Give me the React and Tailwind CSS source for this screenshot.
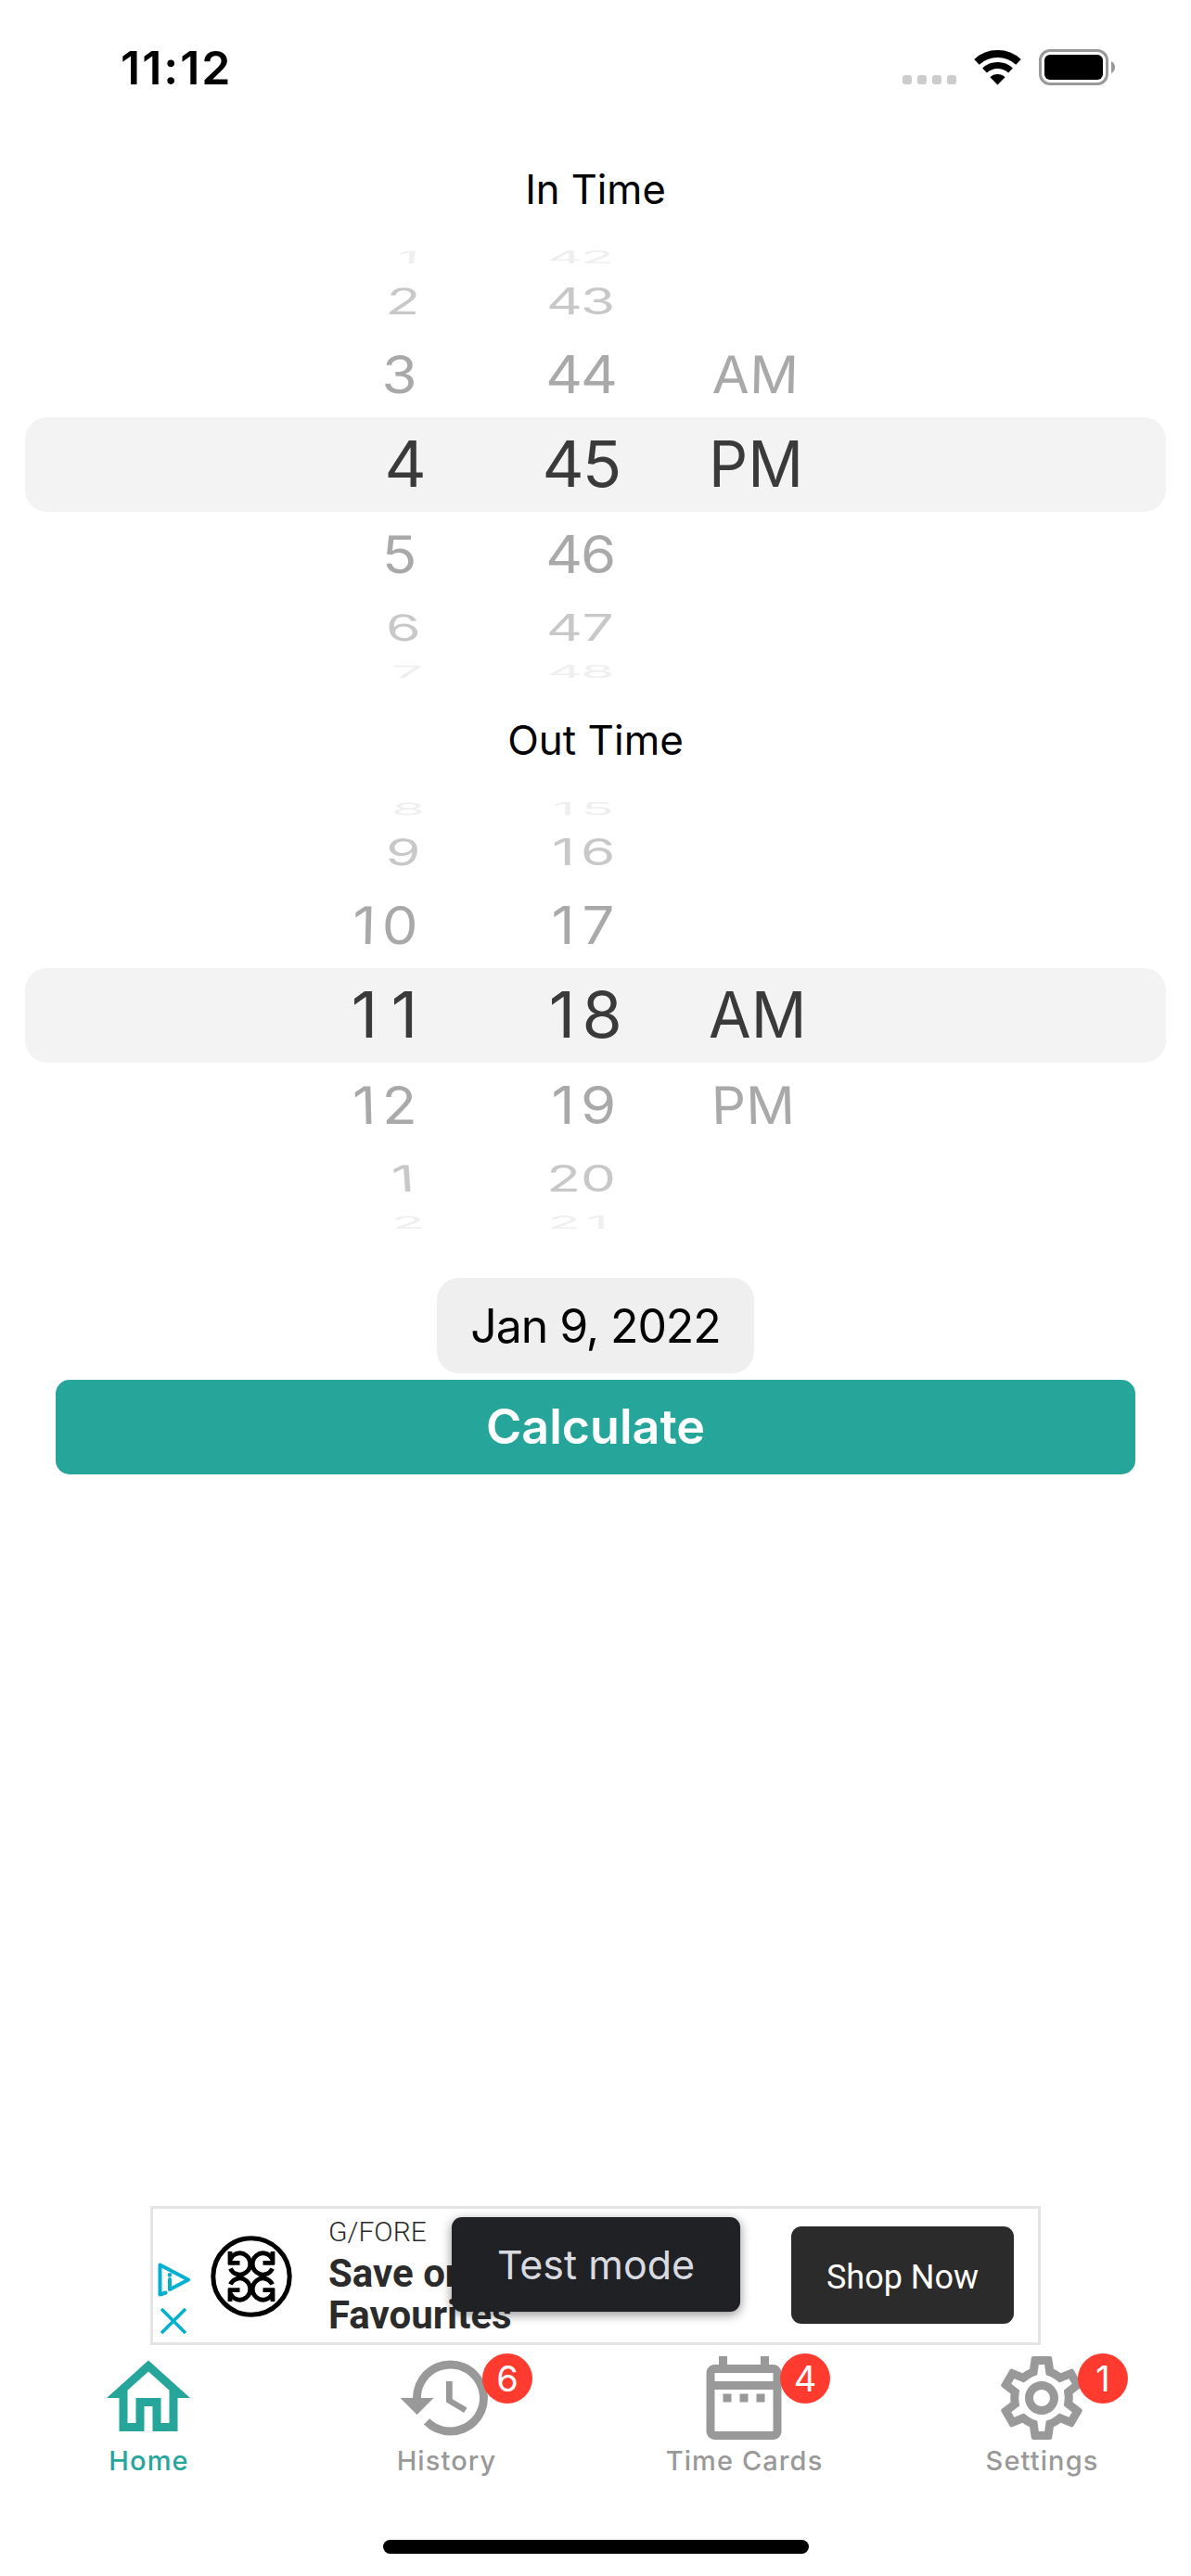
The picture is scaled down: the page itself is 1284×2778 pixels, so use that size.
import React from "react";
import { MdOutlineHome, MdHistory, MdOutlineDateRange, MdOutlineSettings } from "react-icons/md";

// Perspective of the wheel: each row's height, squash, tilt and fade.
const ROWS = [
  { h: "h-[20px]", sx: 0.84, sy: 0.26, color: "text-[#efefef]", skew: -8, hx: 0, mx: -2, px: 0 },
  { h: "h-[74px]", sx: 0.86, sy: 0.56, color: "text-[#c8c8c8]", skew: -4, hx: -5, mx: -2, px: 0 },
  { h: "h-[84px]", sx: 0.88, sy: 0.795, color: "text-[#a9a9a9]", skew: -1.5, hx: -8.5, mx: -2, px: 4 },
  { h: "h-[110px]", sx: 1, sy: 0.975, color: "text-[#3a3a3a]", skew: 0, hx: -0.5, mx: 0, px: 0 },
  { h: "h-[84px]", sx: 0.88, sy: 0.795, color: "text-[#a9a9a9]", skew: 1.5, hx: -8.5, mx: -2, px: 3 },
  { h: "h-[74px]", sx: 0.86, sy: 0.56, color: "text-[#c8c8c8]", skew: 4, hx: -5, mx: -2, px: 0 },
  { h: "h-[20px]", sx: 0.84, sy: 0.26, color: "text-[#efefef]", skew: 8, hx: 0, mx: -2, px: 0 },
];

function Digits({ value }) {
  return [...value].map((d, i) => <span key={i} className="inline-block w-[43px] text-center">{d}</span>);
}

function Picker({ hours, minutes, periods }) {
  return (
    <div className="relative h-[466px] px-[27px] flex flex-col justify-center">
      <div className="h-[102px] rounded-[24px] bg-[#f3f3f4]" />
      <div className="absolute inset-0 flex flex-col">
        {ROWS.map((r, i) => (
          <div key={i} className={"flex items-center text-[70px] leading-none " + r.h + " " + r.color}>
            <span className="w-[458px] flex justify-end">
              <span className="origin-right whitespace-nowrap" style={{ transform: `translateX(${r.hx}px) skewX(${r.skew}deg) scale(${r.sx}, ${r.sy})` }}>
                <Digits value={hours[i]} />
              </span>
            </span>
            <span className="w-[339px] flex justify-center">
              <span className="whitespace-nowrap" style={{ transform: `translateX(${r.mx}px) scale(${r.sx}, ${r.sy})` }}>
                <Digits value={minutes[i]} />
              </span>
            </span>
            <span className="-ml-[33px]">
              <span className="inline-block origin-left" style={{ transform: `translateX(${r.px}px) skewX(${r.skew}deg) scale(${r.sx * 0.945}, ${r.sy})` }}>{periods[i]}</span>
            </span>
          </div>
        ))}
      </div>
    </div>
  );
}

function StatusBar() {
  return (
    <header className="h-[145px] pt-[53px] pl-[130px] pr-[82px] flex justify-between items-start">
      <span className="text-[50px] leading-[40px] font-semibold tracking-[2px]">11:12</span>
      <div className="flex items-start">
        <div className="flex gap-[6px] pt-[28px]">
          {[0, 1, 2, 3].map((i) => <span key={i} className="size-[10px] rounded-[3px] bg-[#cccccc]" />)}
        </div>
        <svg className="ml-[19px] mt-px w-[51px] h-[38px]" viewBox="0 0 51 38" fill="none" stroke="#000">
          <path d="M3 12.9A33 33 0 0 1 48 12.9" strokeWidth="8" />
          <path d="M11.5 22A20.5 20.5 0 0 1 39.5 22" strokeWidth="7" />
          <path d="M25.5 37.5L17.4 29.2A11.7 11.7 0 0 1 33.6 29.2Z" fill="#000" stroke="none" />
        </svg>
        <div className="ml-[19px] w-[75px] h-[39px] border-[3px] border-[#999999] rounded-[12px] p-[3px]">
          <div className="size-full rounded-[6px] bg-black" />
        </div>
        <svg className="ml-[3px] mt-[13px] w-[4px] h-[13px]" viewBox="0 0 4 13"><path d="M0 0Q4 2 4 6.5T0 13Z" fill="#999" /></svg>
      </div>
    </header>
  );
}

// One quarter of the emblem; the other three are its mirror images.
const EMBLEM_QUARTER = "M22.6 8.6A11.2 11.6 0 1 0 22.6 18.6M12.5 14.6H25M23 13V27";

function BrandLogo() {
  return (
    <svg className="size-[88px]" viewBox="-44 -44 88 88" fill="none" stroke="#000">
      <circle r="41.2" strokeWidth="5" />
      <g strokeWidth="4.8">
        <path d={EMBLEM_QUARTER} />
        <path d={EMBLEM_QUARTER} transform="scale(-1 1)" />
        <path d={EMBLEM_QUARTER} transform="scale(1 -1)" />
        <path d={EMBLEM_QUARTER} transform="scale(-1 -1)" />
      </g>
    </svg>
  );
}

function AdBanner() {
  return (
    <section className="relative mx-auto w-[960px] h-[150px] border-[3px] border-[#e4e4e4] flex font-['Roboto',sans-serif] text-[#2b2b2b]">
      <div className="w-[62px] pl-[5px] pt-[58px] flex flex-col gap-[12px] items-start">
        <svg className="w-[36px] h-[37px]" viewBox="0 0 36 37" fill="none" stroke="#04b0d0" strokeWidth="4" strokeLinecap="round" strokeLinejoin="round">
          <path d="M8.5 32.5L2.5 34.5V2.5L33 18.5L13 29V18" />
          <path d="M13 13.2V13.4" strokeWidth="4.5" />
        </svg>
        <svg className="ml-[3px] w-[28px] h-[28px]" viewBox="0 0 28 28" stroke="#04b0d0" strokeWidth="3.6"><path d="M1 1L27 27M27 1L1 27" /></svg>
      </div>
      <div className="pt-[29px]"><BrandLogo /></div>
      <div className="ml-[39px] pt-[7px] flex flex-col">
        <span className="text-[30px] leading-[36px] font-light">G/FORE</span>
        <span className="text-[42px] leading-[45px] font-bold mt-[4px]">Save on<br />Favourites</span>
      </div>
      <div className="absolute right-[26px] top-[19px] w-[240px] h-[105px] rounded-[11px] bg-[#2b2b2b] text-white text-[36px] flex items-center justify-center pt-[4px]">Shop Now</div>
      <div className="absolute left-[322px] top-[9px] w-[311px] h-[102px] rounded-[11px] bg-[#202125] shadow-[0_3px_12px_rgba(0,0,0,0.45)] text-[#d9dae0] font-['Inter',sans-serif] text-[43px] flex items-center justify-center">Test mode</div>
    </section>
  );
}

const TABS = [
  { label: "Home", Icon: MdOutlineHome, color: "text-[#26a69a]" },
  { label: "History", Icon: MdHistory, color: "text-[#999999]", badge: "6" },
  { label: "Time Cards", Icon: MdOutlineDateRange, color: "text-[#999999]", badge: "4" },
  { label: "Settings", Icon: MdOutlineSettings, color: "text-[#999999]", badge: "1" },
];

export default function App() {
  return (
    <main className="w-[1284px] h-[2778px] bg-white font-['Inter',sans-serif] text-black flex flex-col">
      <StatusBar />
      <h2 className="h-[123px] pt-[29px] text-center text-[43.5px] leading-[60px]">In Time</h2>
      <Picker hours={["1", "2", "3", "4", "5", "6", "7"]} minutes={["42", "43", "44", "45", "46", "47", "48"]} periods={["", "", "AM", "PM", "", "", ""]} />
      <h2 className="h-[128px] pt-[34px] text-center text-[44px] leading-[60px]">Out Time</h2>
      <Picker hours={["8", "9", "10", "11", "12", "1", "2"]} minutes={["15", "16", "17", "18", "19", "20", "21"]} periods={["", "", "", "AM", "PM", "", ""]} />
      <div className="mt-[50px] mx-auto w-[342px] h-[103px] rounded-[24px] bg-[#efeff0] flex items-center justify-center pt-[2px] text-[50px] tracking-[-1.1px]">Jan 9, 2022</div>
      <button className="mt-[7px] mx-[60px] h-[102px] rounded-[15px] bg-[#26a69a] text-white text-[52px] font-semibold">Calculate</button>
      <div className="mt-auto">
        <AdBanner />
        <nav className="grid grid-cols-4 pt-[3px] h-[210px]">
          {TABS.map(({ label, Icon, color, badge }) => (
            <div key={label} className={"relative flex flex-col items-center " + color}>
              <Icon className="size-[108px] -ml-px" />
              <span className="text-[29px] leading-[30px] font-medium tracking-[1.1px] -mt-px">{label}</span>
              {badge && <span className="absolute left-[199px] top-[6px] size-[54px] rounded-full bg-[#ff3b30] text-white text-[38px] leading-[54px] text-center">{badge}</span>}
            </div>
          ))}
        </nav>
        <div className="mx-auto w-[459px] h-[15px] rounded-full bg-black mb-[24px]" />
      </div>
    </main>
  );
}
